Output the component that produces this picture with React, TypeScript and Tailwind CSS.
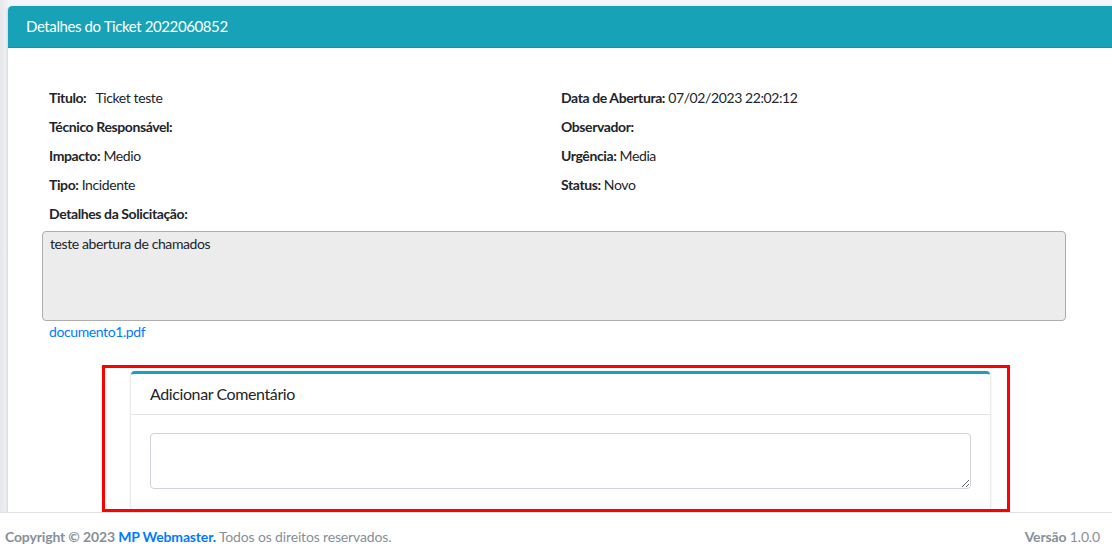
const rowsLeft = [
  { label: "Titulo:", value: "  Ticket teste" },
  { label: "Técnico Responsável:", value: "" },
  { label: "Impacto:", value: "Medio" },
  { label: "Tipo:", value: "Incidente" },
];

const rowsRight = [
  { label: "Data de Abertura:", value: "07/02/2023 22:02:12" },
  { label: "Observador:", value: "" },
  { label: "Urgência:", value: "Media" },
  { label: "Status:", value: "Novo" },
];

function Field({ label, value }: { label: string; value: string }) {
  return (
    <div className="h-[29px] px-[7px] leading-[21px] whitespace-pre">
      <b className="font-bold text-[#212529]">{label}</b>
      {value && <span className="text-[#212529]"> {value}</span>}
    </div>
  );
}

export default function App() {
  return (
    <div
      className="h-[552px] w-[1112px] flex flex-col overflow-hidden bg-white text-[14px] text-[#212529]"
      style={{ fontFamily: "Lato, 'Noto Sans', sans-serif" }}
    >
      {/* Content */}
      <div className="flex-1 flex min-h-0 bg-[#f4f6f9]">
        <div className="w-[8px] shrink-0 bg-gradient-to-r from-[#e6e7eb] to-[#f1f2f5]" />
        <div className="flex-1 min-w-0 pt-[6px]">
          <div className="h-full bg-white rounded-tl-[4px] shadow-[0_0_1px_rgba(0,0,0,0.125),0_1px_3px_rgba(0,0,0,0.2)] overflow-hidden">
            {/* Card header */}
            <div className="h-[42px] bg-[#17a2b8] border-b border-[#1592a6] rounded-tl-[4px] pl-[18px] flex items-center">
              <h3 className="text-[15px] tracking-[-0.4px] text-white leading-none">Detalhes do Ticket 2022060852</h3>
            </div>

            {/* Card body */}
            <div className="pl-[34px] pr-[46px] pt-[39px] tracking-[-0.4px]">
              <div className="grid grid-cols-2">
                <div>
                  {rowsLeft.map((r) => (
                    <Field key={r.label} label={r.label} value={r.value} />
                  ))}
                </div>
                <div>
                  {rowsRight.map((r) => (
                    <Field key={r.label} label={r.label} value={r.value} />
                  ))}
                </div>
              </div>
              <div className="h-[29px] px-[7px] leading-[21px] font-bold">Detalhes da Solicitação:</div>

              <div className="h-[90px] -mt-[1px] bg-[#ececec] border border-[#adadad] rounded-[4px] px-[7px] pt-[1px] leading-[21px] text-[#212529]">
                teste abertura de chamados
              </div>
              <a href="#" className="block px-[7px] leading-[21px] text-[#007bff]">
                documento1.pdf
              </a>

              {/* Comment section */}
              <div className="mt-[23px] ml-[60px] w-[908px] h-[147px] border-[3px] border-[#ff0000] overflow-hidden pl-[26px] pr-[17px] pt-[3px]">
                <div className="bg-white border-t-[3px] border-[#17a2b8] rounded-t-[4px] shadow-[0_0_1px_rgba(0,0,0,0.125),0_1px_3px_rgba(0,0,0,0.2)]">
                  <div className="h-[41px] flex items-center px-[19px] border-b border-[#e3e5e8]">
                    <span className="text-[16px] text-[#212529]">Adicionar Comentário</span>
                  </div>
                  <div className="px-[19px] pt-[18px] pb-[16px]">
                    <textarea className="block w-full h-[56px] border border-[#ced4da] rounded-[4px] outline-none" />
                  </div>
                  <div className="h-[20px] bg-[#f8f9fa]" />
                </div>
              </div>
            </div>
          </div>
        </div>
      </div>

      {/* Footer */}
      <footer className="h-[40px] shrink-0 border-t border-[#dee2e6] bg-white flex items-center justify-between pl-[5px] pr-[12px] pt-[7px] text-[14px] tracking-[-0.15px] text-[#869099]">
        <div>
          <b className="font-bold">Copyright © 2023 </b>
          <a href="#" className="font-bold text-[#007bff]">MP Webmaster.</a>
          <span> Todos os direitos reservados.</span>
        </div>
        <div>
          <b className="font-bold">Versão</b> 1.0.0
        </div>
      </footer>
    </div>
  );
}
